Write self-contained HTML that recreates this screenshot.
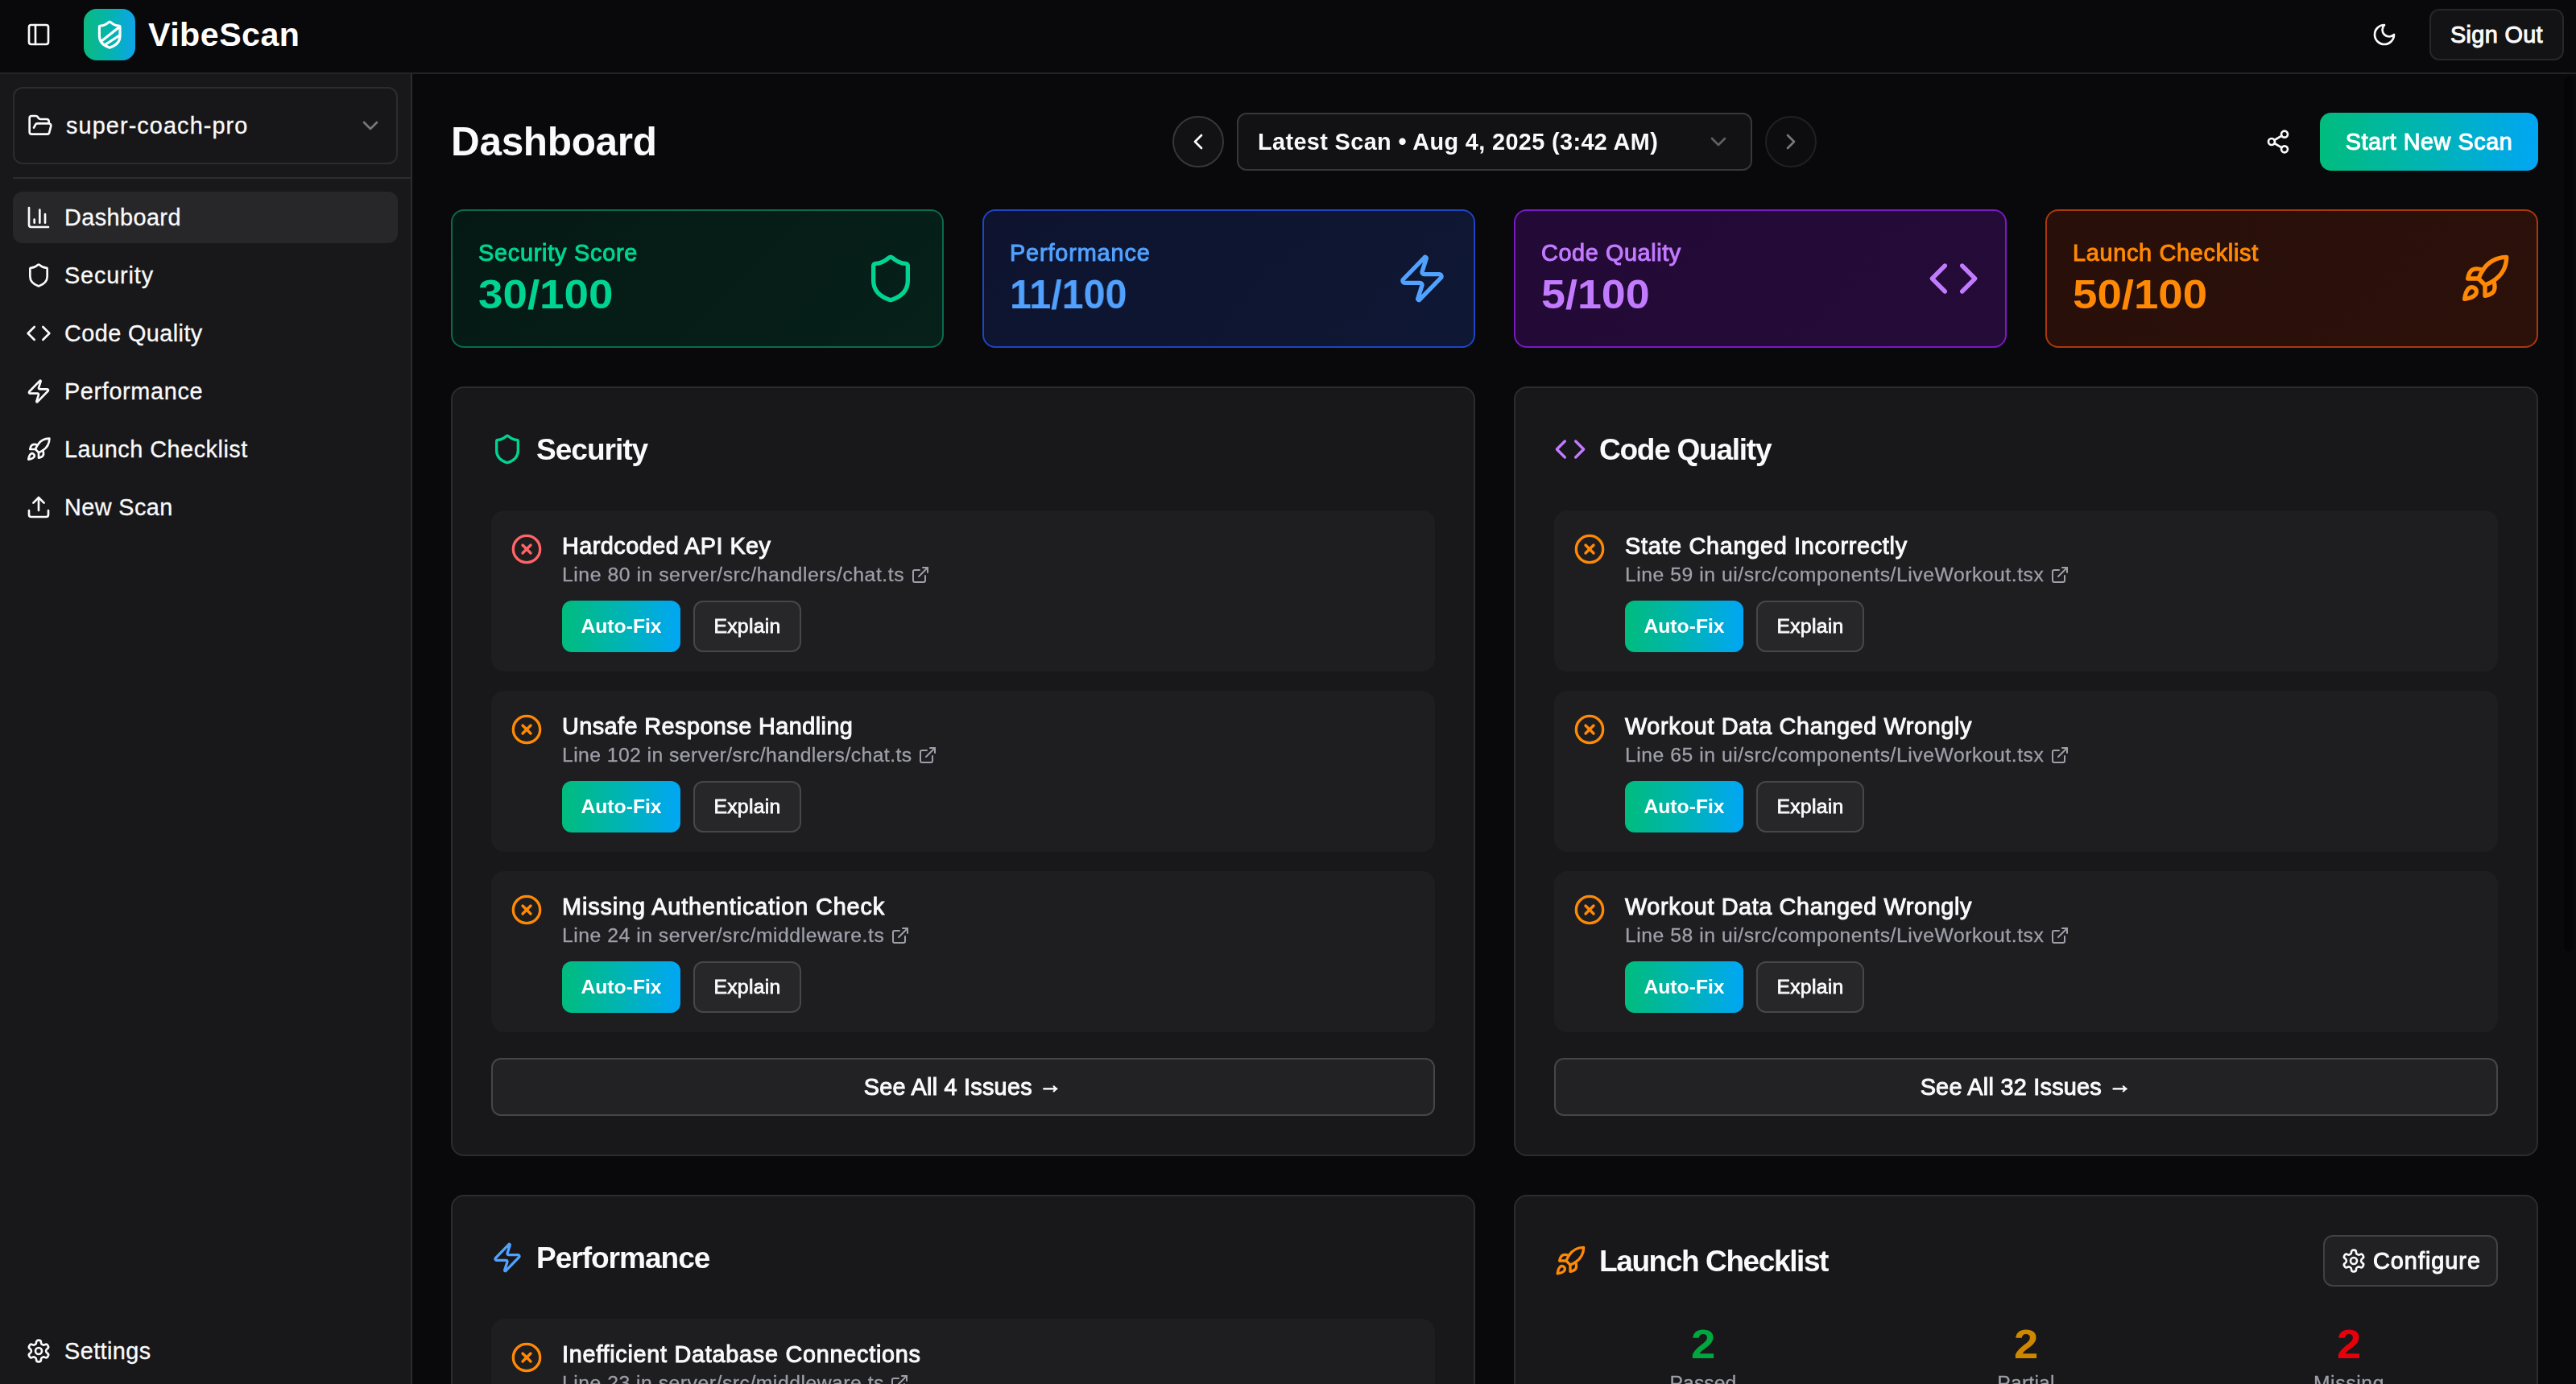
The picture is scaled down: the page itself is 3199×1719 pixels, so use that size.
<!DOCTYPE html>
<html lang="en"><head><meta charset="utf-8"><title>VibeScan Dashboard</title>
<style>
*{box-sizing:border-box;margin:0;padding:0}
html,body{width:3199px;height:1719px;overflow:hidden;background:#09090b}
body{position:relative;font-family:"Liberation Sans", sans-serif;color:#fafafa;-webkit-font-smoothing:antialiased}
.hdr{position:absolute;left:0;top:0;width:3199px;height:92px;border-bottom:2px solid #242428;background:#09090b}
.side{position:absolute;left:0;top:92px;width:512px;height:1627px;background:#18181b;border-right:2px solid #2c2c30}
.main{position:absolute;left:0;top:0;width:3199px;height:1719px;overflow:hidden;pointer-events:none}
.t{position:absolute;white-space:nowrap}
.main .t{will-change:transform}
.ar{position:relative;top:-3px}
.ic{position:absolute;fill:none;stroke-width:2;stroke-linecap:round;stroke-linejoin:round;overflow:visible}
.logo{position:absolute;left:104px;top:11px;width:64px;height:64px;border-radius:16px;background:linear-gradient(90deg,#0cba80 0%,#04b4ad 50%,#0ea5e9 100%);display:flex;align-items:center;justify-content:center}
.btn-o{position:absolute;border:2px solid #27272a;border-radius:12px}
.sel{position:absolute;left:16px;top:16px;width:478px;height:96px;border:2px solid #2c2c30;border-radius:12px;background:#17171a}
.sdiv{position:absolute;left:16px;top:128px;width:494px;height:2px;background:#2c2c30}
.navbg{position:absolute;left:16px;width:478px;height:64px;border-radius:12px;background:#27272a}
.circ{position:absolute;width:64px;height:64px;border-radius:50%;border:2px solid #37373b;background:#121215}
.grad{position:absolute;background:linear-gradient(90deg,#00bc7d 0%,#00b4b4 50%,#00a6f4 100%)}
.stat{position:absolute;top:260px;width:612px;height:172px;border:2px solid;border-radius:16px}
.panel{position:absolute;width:1272px;border:2px solid #2c2c30;border-radius:16px;background:#18181b}
.issue{position:absolute;width:1172px;height:200px;border-radius:16px;background:#1e1e21}
.sbar{position:absolute;left:3184px;top:95px;width:12px;height:1087px;border-radius:6px;background:#050506}
</style></head>
<body>
<header class="hdr">
<svg class="ic" style="left:32px;top:27px;" width="32" height="32" viewBox="0 0 24 24" stroke="#fafafa"><rect width="18" height="18" x="3" y="3" rx="2"/><path d="M9 3v18"/></svg>
<div class="logo"><svg width="38.4" height="38.4" viewBox="0 0 24 24" fill="none" stroke="#fff" stroke-width="2" stroke-linecap="round" stroke-linejoin="round"><defs><clipPath id="shc"><path d="M20 13c0 5-3.5 7.5-7.66 8.95a1 1 0 0 1-.67-.01C7.5 20.5 4 18 4 13V6a1 1 0 0 1 1-1c2 0 4.500-1.2 6.240-2.720a1.170 1.170 0 0 1 1.520 0C14.510 3.810 17 5 19 5a1 1 0 0 1 1 1z"/></clipPath></defs><path d="M20 13c0 5-3.5 7.5-7.66 8.95a1 1 0 0 1-.67-.01C7.5 20.5 4 18 4 13V6a1 1 0 0 1 1-1c2 0 4.5-1.2 6.24-2.72a1.17 1.17 0 0 1 1.52 0C14.51 3.81 17 5 19 5a1 1 0 0 1 1 1z"/><g clip-path="url(#shc)"><path d="M4.5 17.8 20.5 5.2"/><path d="M7 20.64 21 11.68"/></g></svg></div>
<div class="t" style="left:184px;top:15px;line-height:56px;color:#fff;font-size:41.20px;font-weight:700;letter-spacing:0.473px;">VibeScan</div>
<svg class="ic" style="left:2945px;top:27px;" width="32" height="32" viewBox="0 0 24 24" stroke="#fafafa"><path d="M12 3a6 6 0 0 0 9 9 9 9 0 1 1-9-9Z"/></svg>
<div class="btn-o" style="left:3017px;top:11px;width:167px;height:64px;background:#131316;border-color:#27272a"></div>
<div class="t" style="left:3017px;top:23px;line-height:40px;color:#fafafa;width:167px;text-align:center;font-size:28.84px;font-weight:400;letter-spacing:0.350px;-webkit-text-stroke:1.0px currentColor;">Sign Out</div>
</header>
<aside class="side">
<div class="sel"></div>
<svg class="ic" style="left:34px;top:48px;" width="32" height="32" viewBox="0 0 24 24" stroke="#fafafa"><path d="m6 14 1.5-2.9A2 2 0 0 1 9.24 10H20a2 2 0 0 1 1.94 2.5l-1.54 6a2 2 0 0 1-1.95 1.5H4a2 2 0 0 1-2-2V5a2 2 0 0 1 2-2h3.9a2 2 0 0 1 1.69.9l.81 1.2a2 2 0 0 0 1.67.9H18a2 2 0 0 1 2 2v2"/></svg>
<div class="t" style="left:82px;top:44px;line-height:40px;color:#fafafa;font-size:28.84px;font-weight:400;letter-spacing:1.103px;-webkit-text-stroke:0.3px currentColor;">super-coach-pro</div>
<svg class="ic" style="left:444px;top:48px;opacity:.7" width="32" height="32" viewBox="0 0 24 24" stroke="#9f9fa9"><path d="m6 9 6 6 6-6"/></svg>
<div class="sdiv"></div>
<div class="navbg" style="top:146px"></div>
<svg class="ic" style="left:32px;top:162px;" width="32" height="32" viewBox="0 0 24 24" stroke="#fafafa"><path d="M3 3v16a2 2 0 0 0 2 2h16"/><path d="M18 17V9"/><path d="M13 17V5"/><path d="M8 17v-3"/></svg>
<div class="t" style="left:80px;top:158px;line-height:40px;color:#fafafa;font-size:28.84px;font-weight:400;letter-spacing:0.424px;-webkit-text-stroke:0.3px currentColor;">Dashboard</div>
<svg class="ic" style="left:32px;top:234px;" width="32" height="32" viewBox="0 0 24 24" stroke="#fafafa"><path d="M20 13c0 5-3.5 7.5-7.66 8.95a1 1 0 0 1-.67-.01C7.5 20.5 4 18 4 13V6a1 1 0 0 1 1-1c2 0 4.5-1.2 6.24-2.72a1.17 1.17 0 0 1 1.52 0C14.51 3.81 17 5 19 5a1 1 0 0 1 1 1z"/></svg>
<div class="t" style="left:80px;top:230px;line-height:40px;color:#fafafa;font-size:28.84px;font-weight:400;letter-spacing:0.844px;-webkit-text-stroke:0.3px currentColor;">Security</div>
<svg class="ic" style="left:32px;top:306px;" width="32" height="32" viewBox="0 0 24 24" stroke="#fafafa"><path d="m16 18 6-6-6-6"/><path d="m8 6-6 6 6 6"/></svg>
<div class="t" style="left:80px;top:302px;line-height:40px;color:#fafafa;font-size:28.84px;font-weight:400;letter-spacing:0.420px;-webkit-text-stroke:0.3px currentColor;">Code Quality</div>
<svg class="ic" style="left:32px;top:378px;" width="32" height="32" viewBox="0 0 24 24" stroke="#fafafa"><path d="M4 14a1 1 0 0 1-.78-1.63l9.9-10.2a.5.5 0 0 1 .86.46l-1.92 6.02A1 1 0 0 0 13 10h7a1 1 0 0 1 .78 1.63l-9.9 10.2a.5.5 0 0 1-.86-.46l1.92-6.02A1 1 0 0 0 11 14z"/></svg>
<div class="t" style="left:80px;top:374px;line-height:40px;color:#fafafa;font-size:28.84px;font-weight:400;letter-spacing:0.644px;-webkit-text-stroke:0.3px currentColor;">Performance</div>
<svg class="ic" style="left:32px;top:450px;" width="32" height="32" viewBox="0 0 24 24" stroke="#fafafa"><path d="M4.5 16.5c-1.5 1.26-2 5-2 5s3.74-.5 5-2c.71-.84.7-2.13-.09-2.91a2.18 2.18 0 0 0-2.91-.09z"/><path d="m12 15-3-3a22 22 0 0 1 2-3.95A12.88 12.88 0 0 1 22 2c0 2.72-.78 7.5-6 11a22.35 22.35 0 0 1-4 2z"/><path d="M9 12H4s.55-3.03 2-4c1.62-1.08 5 0 5 0"/><path d="M12 15v5s3.03-.55 4-2c1.08-1.62 0-5 0-5"/></svg>
<div class="t" style="left:80px;top:446px;line-height:40px;color:#fafafa;font-size:28.84px;font-weight:400;letter-spacing:0.516px;-webkit-text-stroke:0.3px currentColor;">Launch Checklist</div>
<svg class="ic" style="left:32px;top:522px;" width="32" height="32" viewBox="0 0 24 24" stroke="#fafafa"><path d="M21 15v4a2 2 0 0 1-2 2H5a2 2 0 0 1-2-2v-4"/><path d="m17 8-5-5-5 5"/><path d="M12 3v12"/></svg>
<div class="t" style="left:80px;top:518px;line-height:40px;color:#fafafa;font-size:28.84px;font-weight:400;letter-spacing:0.402px;-webkit-text-stroke:0.3px currentColor;">New Scan</div>
<svg class="ic" style="left:32px;top:1570px;" width="32" height="32" viewBox="0 0 24 24" stroke="#fafafa"><path d="M12.22 2h-.44a2 2 0 0 0-2 2v.18a2 2 0 0 1-1 1.73l-.43.25a2 2 0 0 1-2 0l-.15-.08a2 2 0 0 0-2.73.73l-.22.38a2 2 0 0 0 .73 2.73l.15.1a2 2 0 0 1 1 1.72v.51a2 2 0 0 1-1 1.74l-.15.09a2 2 0 0 0-.73 2.73l.22.38a2 2 0 0 0 2.73.73l.15-.08a2 2 0 0 1 2 0l.43.25a2 2 0 0 1 1 1.73V20a2 2 0 0 0 2 2h.44a2 2 0 0 0 2-2v-.18a2 2 0 0 1 1-1.73l.43-.25a2 2 0 0 1 2 0l.15.08a2 2 0 0 0 2.73-.73l.22-.39a2 2 0 0 0-.73-2.73l-.15-.08a2 2 0 0 1-1-1.74v-.5a2 2 0 0 1 1-1.74l.15-.09a2 2 0 0 0 .73-2.73l-.22-.38a2 2 0 0 0-2.73-.73l-.15.08a2 2 0 0 1-2 0l-.43-.25a2 2 0 0 1-1-1.73V4a2 2 0 0 0-2-2z"/><circle cx="12" cy="12" r="3"/></svg>
<div class="t" style="left:80px;top:1566px;line-height:40px;color:#fafafa;font-size:28.84px;font-weight:400;letter-spacing:0.433px;-webkit-text-stroke:0.3px currentColor;">Settings</div>
</aside>
<main class="main">
<div class="t" style="left:560px;top:144px;line-height:64px;color:#fafafa;font-size:49.44px;font-weight:700;letter-spacing:-0.283px;">Dashboard</div>
<div class="circ" style="left:1456px;top:144px"></div>
<svg class="ic" style="left:1472px;top:160px;" width="32" height="32" viewBox="0 0 24 24" stroke="#fafafa"><path d="m15 18-6-6 6-6"/></svg>
<div class="btn-o" style="left:1536px;top:140px;width:640px;height:72px;background:#121215;border-color:#37373b"></div>
<div class="t" style="left:1562px;top:156px;line-height:40px;color:#fafafa;font-size:28.84px;font-weight:700;letter-spacing:0.383px;">Latest Scan • Aug 4, 2025 (3:42 AM)</div>
<svg class="ic" style="left:2118px;top:160px;opacity:.55" width="32" height="32" viewBox="0 0 24 24" stroke="#9f9fa9"><path d="m6 9 6 6 6-6"/></svg>
<div class="circ" style="left:2192px;top:144px;opacity:.5"></div>
<svg class="ic" style="left:2208px;top:160px;opacity:.45" width="32" height="32" viewBox="0 0 24 24" stroke="#fafafa"><path d="m9 18 6-6-6-6"/></svg>
<svg class="ic" style="left:2813px;top:160px;" width="32" height="32" viewBox="0 0 24 24" stroke="#fafafa"><circle cx="18" cy="5" r="3"/><circle cx="6" cy="12" r="3"/><circle cx="18" cy="19" r="3"/><path d="m8.59 13.51 6.83 3.98"/><path d="m15.41 6.51-6.82 3.98"/></svg>
<div class="grad" style="left:2881px;top:140px;width:271px;height:72px;border-radius:14px"></div>
<div class="t" style="left:2881px;top:156px;line-height:40px;color:#fff;width:271px;text-align:center;font-size:28.84px;font-weight:400;letter-spacing:0.522px;-webkit-text-stroke:1.0px currentColor;">Start New Scan</div>
<div class="stat" style="left:560px;border-color:#0a6a50;background:linear-gradient(135deg,#051914,#07201a)"></div>
<div class="t" style="left:594px;top:294px;line-height:40px;color:#00d492;font-size:28.84px;font-weight:400;letter-spacing:0.761px;-webkit-text-stroke:1.0px currentColor;">Security Score</div>
<div class="t" style="left:594px;top:334px;line-height:64px;color:#00d492;font-size:49.44px;font-weight:700;transform:scaleX(1.1072);transform-origin:left center;">30/100</div>
<svg class="ic" style="left:1074px;top:314px;" width="64" height="64" viewBox="0 0 24 24" stroke="#00d492"><path d="M20 13c0 5-3.5 7.5-7.66 8.95a1 1 0 0 1-.67-.01C7.5 20.5 4 18 4 13V6a1 1 0 0 1 1-1c2 0 4.5-1.2 6.24-2.72a1.17 1.17 0 0 1 1.52 0C14.51 3.81 17 5 19 5a1 1 0 0 1 1 1z"/></svg>
<div class="stat" style="left:1220px;border-color:#1d45c4;background:linear-gradient(135deg,#0e1430,#0e1733)"></div>
<div class="t" style="left:1254px;top:294px;line-height:40px;color:#51a2ff;font-size:28.84px;font-weight:400;letter-spacing:0.870px;-webkit-text-stroke:1.0px currentColor;">Performance</div>
<div class="t" style="left:1254px;top:334px;line-height:64px;color:#51a2ff;font-size:49.44px;font-weight:700;transform:scaleX(0.9796);transform-origin:left center;">11/100</div>
<svg class="ic" style="left:1734px;top:314px;" width="64" height="64" viewBox="0 0 24 24" stroke="#51a2ff"><path d="M4 14a1 1 0 0 1-.78-1.63l9.9-10.2a.5.5 0 0 1 .86.46l-1.92 6.02A1 1 0 0 0 13 10h7a1 1 0 0 1 .78 1.63l-9.9 10.2a.5.5 0 0 1-.86-.46l1.92-6.02A1 1 0 0 0 11 14z"/></svg>
<div class="stat" style="left:1880px;border-color:#7a18c4;background:linear-gradient(135deg,#220936,#250c38)"></div>
<div class="t" style="left:1914px;top:294px;line-height:40px;color:#c27aff;font-size:28.84px;font-weight:400;letter-spacing:0.599px;-webkit-text-stroke:1.0px currentColor;">Code Quality</div>
<div class="t" style="left:1914px;top:334px;line-height:64px;color:#c27aff;font-size:49.44px;font-weight:700;transform:scaleX(1.0892);transform-origin:left center;">5/100</div>
<svg class="ic" style="left:2394px;top:314px;" width="64" height="64" viewBox="0 0 24 24" stroke="#c27aff"><path d="m16 18 6-6-6-6"/><path d="m8 6-6 6 6 6"/></svg>
<div class="stat" style="left:2540px;border-color:#aa390a;background:linear-gradient(135deg,#290f09,#2c110b)"></div>
<div class="t" style="left:2574px;top:294px;line-height:40px;color:#ff8904;font-size:28.84px;font-weight:400;letter-spacing:0.714px;-webkit-text-stroke:1.0px currentColor;">Launch Checklist</div>
<div class="t" style="left:2574px;top:334px;line-height:64px;color:#ff8904;font-size:49.44px;font-weight:700;transform:scaleX(1.1051);transform-origin:left center;">50/100</div>
<svg class="ic" style="left:3054px;top:314px;" width="64" height="64" viewBox="0 0 24 24" stroke="#ff8904"><path d="M4.5 16.5c-1.5 1.26-2 5-2 5s3.74-.5 5-2c.71-.84.7-2.13-.09-2.91a2.18 2.18 0 0 0-2.91-.09z"/><path d="m12 15-3-3a22 22 0 0 1 2-3.95A12.88 12.88 0 0 1 22 2c0 2.72-.78 7.5-6 11a22.35 22.35 0 0 1-4 2z"/><path d="M9 12H4s.55-3.03 2-4c1.62-1.08 5 0 5 0"/><path d="M12 15v5s3.03-.55 4-2c1.08-1.62 0-5 0-5"/></svg>
<div class="panel" style="left:560px;top:480px;height:956px"></div>
<svg class="ic" style="left:610px;top:538px;" width="40" height="40" viewBox="0 0 24 24" stroke="#00d492"><path d="M20 13c0 5-3.5 7.5-7.66 8.95a1 1 0 0 1-.67-.01C7.5 20.5 4 18 4 13V6a1 1 0 0 1 1-1c2 0 4.5-1.2 6.24-2.72a1.17 1.17 0 0 1 1.52 0C14.51 3.81 17 5 19 5a1 1 0 0 1 1 1z"/></svg>
<div class="t" style="left:666px;top:530px;line-height:56px;color:#fafafa;font-size:37.08px;font-weight:700;letter-spacing:-1.011px;">Security</div>
<div class="issue" style="left:610px;top:634px"></div>
<svg class="ic" style="left:634px;top:662px;" width="40" height="40" viewBox="0 0 24 24" stroke="#ff6467"><circle cx="12" cy="12" r="10"/><path d="m15 9-6 6"/><path d="m9 9 6 6"/></svg>
<div class="t" style="left:698px;top:658px;line-height:40px;color:#fafafa;font-size:28.84px;font-weight:400;letter-spacing:0.464px;-webkit-text-stroke:1.0px currentColor;">Hardcoded API Key</div>
<div class="t" style="left:698px;top:698px;line-height:32px;color:#9f9fa9;font-size:24.72px;font-weight:400;letter-spacing:0.557px;-webkit-text-stroke:0.3px currentColor;">Line 80 in server/src/handlers/chat.ts</div>
<svg class="ic" style="left:1130.5px;top:702px" width="24" height="24" viewBox="0 0 24 24" stroke="#9f9fa9"><path d="M15 3h6v6"/><path d="M10 14 21 3"/><path d="M18 13v6a2 2 0 0 1-2 2H5a2 2 0 0 1-2-2V8a2 2 0 0 1 2-2h6"/></svg>
<div class="grad" style="left:698px;top:746px;width:147px;height:64px;border-radius:12px"></div>
<div class="t" style="left:698px;top:762px;line-height:32px;color:#fff;width:147px;text-align:center;font-size:24.72px;font-weight:700;letter-spacing:-0.002px;">Auto-Fix</div>
<div class="btn-o" style="left:861px;top:746px;width:134px;height:64px;background:#27272a;border-color:#47474b"></div>
<div class="t" style="left:861px;top:762px;line-height:32px;color:#fafafa;width:134px;text-align:center;font-size:24.72px;font-weight:400;letter-spacing:0.294px;-webkit-text-stroke:0.8px currentColor;">Explain</div>
<div class="issue" style="left:610px;top:858px"></div>
<svg class="ic" style="left:634px;top:886px;" width="40" height="40" viewBox="0 0 24 24" stroke="#ff8904"><circle cx="12" cy="12" r="10"/><path d="m15 9-6 6"/><path d="m9 9 6 6"/></svg>
<div class="t" style="left:698px;top:882px;line-height:40px;color:#fafafa;font-size:28.84px;font-weight:400;letter-spacing:0.431px;-webkit-text-stroke:1.0px currentColor;">Unsafe Response Handling</div>
<div class="t" style="left:698px;top:922px;line-height:32px;color:#9f9fa9;font-size:24.72px;font-weight:400;letter-spacing:0.432px;-webkit-text-stroke:0.3px currentColor;">Line 102 in server/src/handlers/chat.ts</div>
<svg class="ic" style="left:1140.1px;top:926px" width="24" height="24" viewBox="0 0 24 24" stroke="#9f9fa9"><path d="M15 3h6v6"/><path d="M10 14 21 3"/><path d="M18 13v6a2 2 0 0 1-2 2H5a2 2 0 0 1-2-2V8a2 2 0 0 1 2-2h6"/></svg>
<div class="grad" style="left:698px;top:970px;width:147px;height:64px;border-radius:12px"></div>
<div class="t" style="left:698px;top:986px;line-height:32px;color:#fff;width:147px;text-align:center;font-size:24.72px;font-weight:700;letter-spacing:-0.002px;">Auto-Fix</div>
<div class="btn-o" style="left:861px;top:970px;width:134px;height:64px;background:#27272a;border-color:#47474b"></div>
<div class="t" style="left:861px;top:986px;line-height:32px;color:#fafafa;width:134px;text-align:center;font-size:24.72px;font-weight:400;letter-spacing:0.294px;-webkit-text-stroke:0.8px currentColor;">Explain</div>
<div class="issue" style="left:610px;top:1082px"></div>
<svg class="ic" style="left:634px;top:1110px;" width="40" height="40" viewBox="0 0 24 24" stroke="#ff8904"><circle cx="12" cy="12" r="10"/><path d="m15 9-6 6"/><path d="m9 9 6 6"/></svg>
<div class="t" style="left:698px;top:1106px;line-height:40px;color:#fafafa;font-size:28.84px;font-weight:400;letter-spacing:0.876px;-webkit-text-stroke:1.0px currentColor;">Missing Authentication Check</div>
<div class="t" style="left:698px;top:1146px;line-height:32px;color:#9f9fa9;font-size:24.72px;font-weight:400;letter-spacing:0.524px;-webkit-text-stroke:0.3px currentColor;">Line 24 in server/src/middleware.ts</div>
<svg class="ic" style="left:1105.7px;top:1150px" width="24" height="24" viewBox="0 0 24 24" stroke="#9f9fa9"><path d="M15 3h6v6"/><path d="M10 14 21 3"/><path d="M18 13v6a2 2 0 0 1-2 2H5a2 2 0 0 1-2-2V8a2 2 0 0 1 2-2h6"/></svg>
<div class="grad" style="left:698px;top:1194px;width:147px;height:64px;border-radius:12px"></div>
<div class="t" style="left:698px;top:1210px;line-height:32px;color:#fff;width:147px;text-align:center;font-size:24.72px;font-weight:700;letter-spacing:-0.002px;">Auto-Fix</div>
<div class="btn-o" style="left:861px;top:1194px;width:134px;height:64px;background:#27272a;border-color:#47474b"></div>
<div class="t" style="left:861px;top:1210px;line-height:32px;color:#fafafa;width:134px;text-align:center;font-size:24.72px;font-weight:400;letter-spacing:0.294px;-webkit-text-stroke:0.8px currentColor;">Explain</div>
<div class="btn-o" style="left:610px;top:1314px;width:1172px;height:72px;background:#222225;border-color:#45454a"></div>
<div class="t" style="left:610px;top:1330px;line-height:40px;color:#fafafa;width:1172px;text-align:center;font-size:28.84px;font-weight:400;letter-spacing:0.241px;-webkit-text-stroke:1.0px currentColor;">See All 4 Issues <span class="ar">→</span></div>
<div class="panel" style="left:1880px;top:480px;height:956px"></div>
<svg class="ic" style="left:1930px;top:538px;" width="40" height="40" viewBox="0 0 24 24" stroke="#c27aff"><path d="m16 18 6-6-6-6"/><path d="m8 6-6 6 6 6"/></svg>
<div class="t" style="left:1986px;top:530px;line-height:56px;color:#fafafa;font-size:37.08px;font-weight:700;letter-spacing:-1.287px;">Code Quality</div>
<div class="issue" style="left:1930px;top:634px"></div>
<svg class="ic" style="left:1954px;top:662px;" width="40" height="40" viewBox="0 0 24 24" stroke="#ff8904"><circle cx="12" cy="12" r="10"/><path d="m15 9-6 6"/><path d="m9 9 6 6"/></svg>
<div class="t" style="left:2018px;top:658px;line-height:40px;color:#fafafa;font-size:28.84px;font-weight:400;letter-spacing:0.698px;-webkit-text-stroke:1.0px currentColor;">State Changed Incorrectly</div>
<div class="t" style="left:2018px;top:698px;line-height:32px;color:#9f9fa9;font-size:24.72px;font-weight:400;letter-spacing:0.533px;-webkit-text-stroke:0.3px currentColor;">Line 59 in ui/src/components/LiveWorkout.tsx</div>
<svg class="ic" style="left:2545.9px;top:702px" width="24" height="24" viewBox="0 0 24 24" stroke="#9f9fa9"><path d="M15 3h6v6"/><path d="M10 14 21 3"/><path d="M18 13v6a2 2 0 0 1-2 2H5a2 2 0 0 1-2-2V8a2 2 0 0 1 2-2h6"/></svg>
<div class="grad" style="left:2018px;top:746px;width:147px;height:64px;border-radius:12px"></div>
<div class="t" style="left:2018px;top:762px;line-height:32px;color:#fff;width:147px;text-align:center;font-size:24.72px;font-weight:700;letter-spacing:-0.002px;">Auto-Fix</div>
<div class="btn-o" style="left:2181px;top:746px;width:134px;height:64px;background:#27272a;border-color:#47474b"></div>
<div class="t" style="left:2181px;top:762px;line-height:32px;color:#fafafa;width:134px;text-align:center;font-size:24.72px;font-weight:400;letter-spacing:0.294px;-webkit-text-stroke:0.8px currentColor;">Explain</div>
<div class="issue" style="left:1930px;top:858px"></div>
<svg class="ic" style="left:1954px;top:886px;" width="40" height="40" viewBox="0 0 24 24" stroke="#ff8904"><circle cx="12" cy="12" r="10"/><path d="m15 9-6 6"/><path d="m9 9 6 6"/></svg>
<div class="t" style="left:2018px;top:882px;line-height:40px;color:#fafafa;font-size:28.84px;font-weight:400;letter-spacing:0.607px;-webkit-text-stroke:1.0px currentColor;">Workout Data Changed Wrongly</div>
<div class="t" style="left:2018px;top:922px;line-height:32px;color:#9f9fa9;font-size:24.72px;font-weight:400;letter-spacing:0.533px;-webkit-text-stroke:0.3px currentColor;">Line 65 in ui/src/components/LiveWorkout.tsx</div>
<svg class="ic" style="left:2545.9px;top:926px" width="24" height="24" viewBox="0 0 24 24" stroke="#9f9fa9"><path d="M15 3h6v6"/><path d="M10 14 21 3"/><path d="M18 13v6a2 2 0 0 1-2 2H5a2 2 0 0 1-2-2V8a2 2 0 0 1 2-2h6"/></svg>
<div class="grad" style="left:2018px;top:970px;width:147px;height:64px;border-radius:12px"></div>
<div class="t" style="left:2018px;top:986px;line-height:32px;color:#fff;width:147px;text-align:center;font-size:24.72px;font-weight:700;letter-spacing:-0.002px;">Auto-Fix</div>
<div class="btn-o" style="left:2181px;top:970px;width:134px;height:64px;background:#27272a;border-color:#47474b"></div>
<div class="t" style="left:2181px;top:986px;line-height:32px;color:#fafafa;width:134px;text-align:center;font-size:24.72px;font-weight:400;letter-spacing:0.294px;-webkit-text-stroke:0.8px currentColor;">Explain</div>
<div class="issue" style="left:1930px;top:1082px"></div>
<svg class="ic" style="left:1954px;top:1110px;" width="40" height="40" viewBox="0 0 24 24" stroke="#ff8904"><circle cx="12" cy="12" r="10"/><path d="m15 9-6 6"/><path d="m9 9 6 6"/></svg>
<div class="t" style="left:2018px;top:1106px;line-height:40px;color:#fafafa;font-size:28.84px;font-weight:400;letter-spacing:0.607px;-webkit-text-stroke:1.0px currentColor;">Workout Data Changed Wrongly</div>
<div class="t" style="left:2018px;top:1146px;line-height:32px;color:#9f9fa9;font-size:24.72px;font-weight:400;letter-spacing:0.533px;-webkit-text-stroke:0.3px currentColor;">Line 58 in ui/src/components/LiveWorkout.tsx</div>
<svg class="ic" style="left:2545.8px;top:1150px" width="24" height="24" viewBox="0 0 24 24" stroke="#9f9fa9"><path d="M15 3h6v6"/><path d="M10 14 21 3"/><path d="M18 13v6a2 2 0 0 1-2 2H5a2 2 0 0 1-2-2V8a2 2 0 0 1 2-2h6"/></svg>
<div class="grad" style="left:2018px;top:1194px;width:147px;height:64px;border-radius:12px"></div>
<div class="t" style="left:2018px;top:1210px;line-height:32px;color:#fff;width:147px;text-align:center;font-size:24.72px;font-weight:700;letter-spacing:-0.002px;">Auto-Fix</div>
<div class="btn-o" style="left:2181px;top:1194px;width:134px;height:64px;background:#27272a;border-color:#47474b"></div>
<div class="t" style="left:2181px;top:1210px;line-height:32px;color:#fafafa;width:134px;text-align:center;font-size:24.72px;font-weight:400;letter-spacing:0.294px;-webkit-text-stroke:0.8px currentColor;">Explain</div>
<div class="btn-o" style="left:1930px;top:1314px;width:1172px;height:72px;background:#222225;border-color:#45454a"></div>
<div class="t" style="left:1930px;top:1330px;line-height:40px;color:#fafafa;width:1172px;text-align:center;font-size:28.84px;font-weight:400;letter-spacing:0.250px;-webkit-text-stroke:1.0px currentColor;">See All 32 Issues <span class="ar">→</span></div>
<div class="panel" style="left:560px;top:1484px;height:700px"></div>
<svg class="ic" style="left:610px;top:1542px;" width="40" height="40" viewBox="0 0 24 24" stroke="#51a2ff"><path d="M4 14a1 1 0 0 1-.78-1.63l9.9-10.2a.5.5 0 0 1 .86.46l-1.92 6.02A1 1 0 0 0 13 10h7a1 1 0 0 1 .78 1.63l-9.9 10.2a.5.5 0 0 1-.86-.46l1.92-6.02A1 1 0 0 0 11 14z"/></svg>
<div class="t" style="left:666px;top:1534px;line-height:56px;color:#fafafa;font-size:37.08px;font-weight:700;letter-spacing:-1.033px;">Performance</div>
<div class="issue" style="left:610px;top:1638px"></div>
<svg class="ic" style="left:634px;top:1666px;" width="40" height="40" viewBox="0 0 24 24" stroke="#ff8904"><circle cx="12" cy="12" r="10"/><path d="m15 9-6 6"/><path d="m9 9 6 6"/></svg>
<div class="t" style="left:698px;top:1662px;line-height:40px;color:#fafafa;font-size:28.84px;font-weight:400;letter-spacing:0.724px;-webkit-text-stroke:1.0px currentColor;">Inefficient Database Connections</div>
<div class="t" style="left:698px;top:1702px;line-height:32px;color:#9f9fa9;font-size:24.72px;font-weight:400;letter-spacing:0.515px;-webkit-text-stroke:0.3px currentColor;">Line 23 in server/src/middleware.ts</div>
<svg class="ic" style="left:1105.4px;top:1706px" width="24" height="24" viewBox="0 0 24 24" stroke="#9f9fa9"><path d="M15 3h6v6"/><path d="M10 14 21 3"/><path d="M18 13v6a2 2 0 0 1-2 2H5a2 2 0 0 1-2-2V8a2 2 0 0 1 2-2h6"/></svg>
<div class="grad" style="left:698px;top:1750px;width:147px;height:64px;border-radius:12px"></div>
<div class="t" style="left:698px;top:1766px;line-height:32px;color:#fff;width:147px;text-align:center;font-size:24.72px;font-weight:700;letter-spacing:-0.002px;">Auto-Fix</div>
<div class="btn-o" style="left:861px;top:1750px;width:134px;height:64px;background:#27272a;border-color:#47474b"></div>
<div class="t" style="left:861px;top:1766px;line-height:32px;color:#fafafa;width:134px;text-align:center;font-size:24.72px;font-weight:400;letter-spacing:0.294px;-webkit-text-stroke:0.8px currentColor;">Explain</div>
<div class="panel" style="left:1880px;top:1484px;height:700px"></div>
<svg class="ic" style="left:1930px;top:1546px;" width="40" height="40" viewBox="0 0 24 24" stroke="#ff8904"><path d="M4.5 16.5c-1.5 1.26-2 5-2 5s3.74-.5 5-2c.71-.84.7-2.13-.09-2.91a2.18 2.18 0 0 0-2.91-.09z"/><path d="m12 15-3-3a22 22 0 0 1 2-3.95A12.88 12.88 0 0 1 22 2c0 2.72-.78 7.5-6 11a22.35 22.35 0 0 1-4 2z"/><path d="M9 12H4s.55-3.03 2-4c1.62-1.08 5 0 5 0"/><path d="M12 15v5s3.03-.55 4-2c1.08-1.62 0-5 0-5"/></svg>
<div class="t" style="left:1986px;top:1538px;line-height:56px;color:#fafafa;font-size:37.08px;font-weight:700;letter-spacing:-1.438px;">Launch Checklist</div>
<div class="btn-o" style="left:2885px;top:1534px;width:217px;height:64px;background:#212124;border-color:#414145"></div>
<svg class="ic" style="left:2907px;top:1550px;" width="32" height="32" viewBox="0 0 24 24" stroke="#fafafa"><path d="M12.22 2h-.44a2 2 0 0 0-2 2v.18a2 2 0 0 1-1 1.73l-.43.25a2 2 0 0 1-2 0l-.15-.08a2 2 0 0 0-2.73.73l-.22.38a2 2 0 0 0 .73 2.73l.15.1a2 2 0 0 1 1 1.72v.51a2 2 0 0 1-1 1.74l-.15.09a2 2 0 0 0-.73 2.73l.22.38a2 2 0 0 0 2.73.73l.15-.08a2 2 0 0 1 2 0l.43.25a2 2 0 0 1 1 1.73V20a2 2 0 0 0 2 2h.44a2 2 0 0 0 2-2v-.18a2 2 0 0 1 1-1.73l.43-.25a2 2 0 0 1 2 0l.15.08a2 2 0 0 0 2.73-.73l.22-.39a2 2 0 0 0-.73-2.73l-.15-.08a2 2 0 0 1-1-1.74v-.5a2 2 0 0 1 1-1.74l.15-.09a2 2 0 0 0 .73-2.73l-.22-.38a2 2 0 0 0-2.73-.73l-.15.08a2 2 0 0 1-2 0l-.43-.25a2 2 0 0 1-1-1.73V4a2 2 0 0 0-2-2z"/><circle cx="12" cy="12" r="3"/></svg>
<div class="t" style="left:2947px;top:1546px;line-height:40px;color:#fafafa;font-size:28.84px;font-weight:400;letter-spacing:1.000px;-webkit-text-stroke:1.0px currentColor;">Configure</div>
<div class="t" style="left:1964.6999999999998px;top:1638px;line-height:64px;color:#00a63e;width:300px;text-align:center;font-size:49.44px;font-weight:700;transform:scaleX(1.0994);transform-origin:center center;">2</div>
<div class="t" style="left:1964.6999999999998px;top:1702px;line-height:32px;color:#9f9fa9;width:300px;text-align:center;font-size:24.72px;font-weight:400;letter-spacing:0.075px;-webkit-text-stroke:0.3px currentColor;">Passed</div>
<div class="t" style="left:2366px;top:1638px;line-height:64px;color:#d08700;width:300px;text-align:center;font-size:49.44px;font-weight:700;transform:scaleX(1.0994);transform-origin:center center;">2</div>
<div class="t" style="left:2366px;top:1702px;line-height:32px;color:#9f9fa9;width:300px;text-align:center;font-size:24.72px;font-weight:400;letter-spacing:0.182px;-webkit-text-stroke:0.3px currentColor;">Partial</div>
<div class="t" style="left:2767.3px;top:1638px;line-height:64px;color:#e7000b;width:300px;text-align:center;font-size:49.44px;font-weight:700;transform:scaleX(1.0994);transform-origin:center center;">2</div>
<div class="t" style="left:2767.3px;top:1702px;line-height:32px;color:#9f9fa9;width:300px;text-align:center;font-size:24.72px;font-weight:400;letter-spacing:0.625px;-webkit-text-stroke:0.3px currentColor;">Missing</div>
<div class="sbar"></div>
</main>
</body></html>
